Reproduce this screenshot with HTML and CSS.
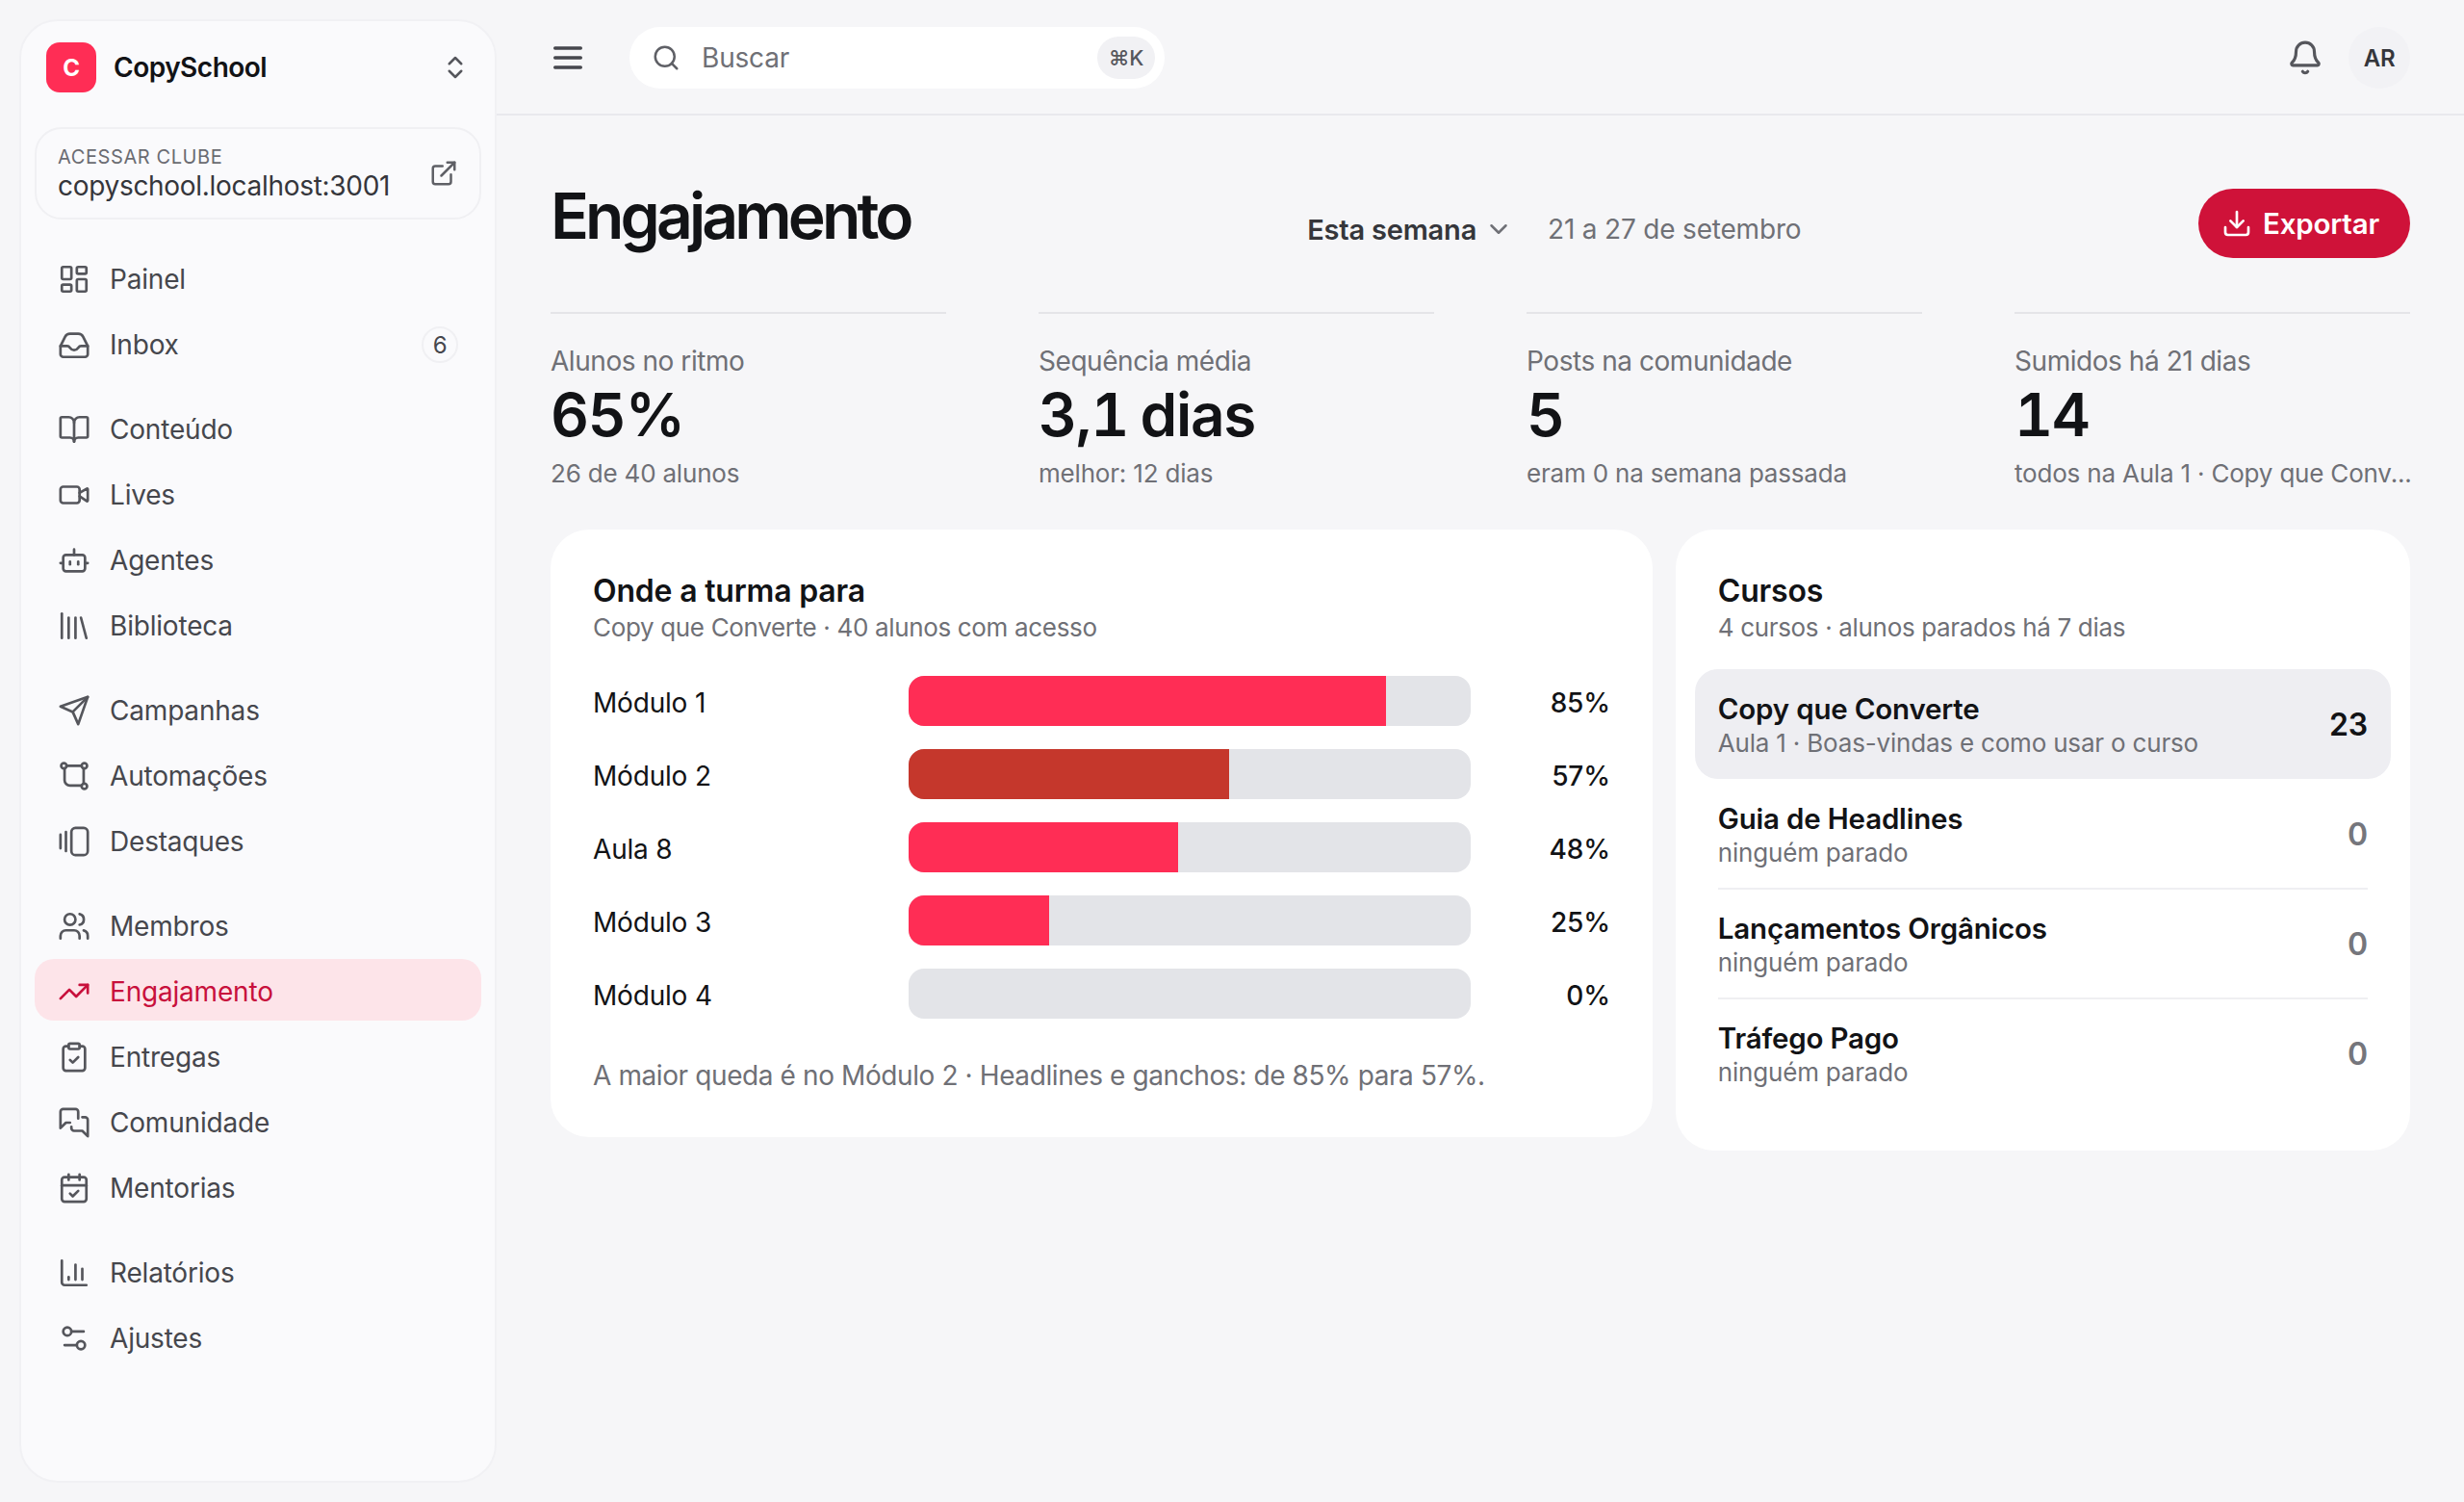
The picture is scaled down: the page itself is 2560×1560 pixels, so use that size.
FILE: index.html
```html
<!DOCTYPE html>
<html lang="pt-BR">
<head>
  <meta charset="UTF-8">
  <title>Engajamento - CopySchool</title>
  <link rel="stylesheet" href="styles.css">
</head>
<body>
  <aside class="sidebar">
    <div class="brand">
      <div class="brand-logo">C</div>
      <span class="brand-name">CopySchool</span>
      <svg class="icon brand-switch" viewBox="0 0 24 24"><path d="m7 15 5 5 5-5"/><path d="m7 9 5-5 5 5"/></svg>
    </div>

    <div class="club-link">
      <div>
        <div class="club-label">ACESSAR CLUBE</div>
        <div class="club-url">copyschool.localhost:3001</div>
      </div>
      <svg class="icon" viewBox="0 0 24 24"><path d="M15 3h6v6"/><path d="M10 14 21 3"/><path d="M18 13v6a2 2 0 0 1-2 2H5a2 2 0 0 1-2-2V8a2 2 0 0 1 2-2h6"/></svg>
    </div>

    <nav class="nav">
      <div class="nav-group">
        <a class="nav-item"><svg class="icon" viewBox="0 0 24 24"><rect x="3" y="3" width="7" height="9" rx="1"/><rect x="14" y="3" width="7" height="5" rx="1"/><rect x="14" y="12" width="7" height="9" rx="1"/><rect x="3" y="16" width="7" height="5" rx="1"/></svg>Painel</a>
        <a class="nav-item"><svg class="icon" viewBox="0 0 24 24"><path d="M2 13h5c1 0 1.500.6 2 1.300.7 1 1.700 1.700 3 1.700s2.300-.7 3-1.700c.5-.7 1-1.300 2-1.300h5"/><path d="M5.450 6.100 2 13v6a2 2 0 0 0 2 2h16a2 2 0 0 0 2-2v-6l-3.450-6.900A4 4 0 0 0 15 4H9a4 4 0 0 0-3.550 2.100z"/></svg>Inbox<span class="nav-badge">6</span></a>
      </div>
      <div class="nav-group">
        <a class="nav-item"><svg class="icon" viewBox="0 0 24 24"><path d="M12 7v14"/><path d="M3 18a1 1 0 0 1-1-1V4a1 1 0 0 1 1-1h5a4 4 0 0 1 4 4 4 4 0 0 1 4-4h5a1 1 0 0 1 1 1v13a1 1 0 0 1-1 1h-6a3 3 0 0 0-3 3 3 3 0 0 0-3-3z"/></svg>Conteúdo</a>
        <a class="nav-item"><svg class="icon" viewBox="0 0 24 24"><path d="m16 13 5.200 3.500a.5.5 0 0 0 .8-.4V7.900a.5.5 0 0 0-.8-.4L16 10.500"/><rect x="2" y="6" width="14" height="12" rx="2"/></svg>Lives</a>
        <a class="nav-item"><svg class="icon" viewBox="0 0 24 24"><path d="M12 8V4"/><rect x="4" y="8" width="16" height="12" rx="2"/><path d="M2 14h2"/><path d="M20 14h2"/><path d="M9 13v2"/><path d="M15 13v2"/></svg>Agentes</a>
        <a class="nav-item"><svg class="icon" viewBox="0 0 24 24"><path d="m17 6 4 15"/><path d="M13 6v15"/><path d="M8 6v15"/><path d="M3 3v18"/></svg>Biblioteca</a>
      </div>
      <div class="nav-group">
        <a class="nav-item"><svg class="icon" viewBox="0 0 24 24"><path d="m22 2-7 20-4-9-9-4Z"/><path d="M22 2 11 13"/></svg>Campanhas</a>
        <a class="nav-item"><svg class="icon" viewBox="0 0 24 24"><circle cx="4.500" cy="4.500" r="2"/><circle cx="19.500" cy="4.500" r="2"/><circle cx="19.500" cy="19.500" r="2"/><path d="M6.500 4.500h11"/><path d="M5 6.500V15a4 4 0 0 0 4 4h8.500"/><path d="M19 6.500v11"/></svg>Automações</a>
        <a class="nav-item"><svg class="icon" viewBox="0 0 24 24"><path d="M2 7v10"/><path d="M6 5v14"/><rect x="10" y="2" width="12" height="20" rx="3"/></svg>Destaques</a>
      </div>
      <div class="nav-group">
        <a class="nav-item"><svg class="icon" viewBox="0 0 24 24"><path d="M16 21v-2a4 4 0 0 0-4-4H6a4 4 0 0 0-4 4v2"/><path d="M16 3.100a4 4 0 0 1 0 7.800"/><path d="M22 21v-2a4 4 0 0 0-3-3.900"/><circle cx="9" cy="7" r="4"/></svg>Membros</a>
        <a class="nav-item active"><svg class="icon" viewBox="0 0 24 24"><path d="M16 7h6v6"/><path d="m22 7-8.500 8.500-5-5L2 17"/></svg>Engajamento</a>
        <a class="nav-item"><svg class="icon" viewBox="0 0 24 24"><rect x="8" y="2" width="8" height="4" rx="1"/><path d="M16 4h2a2 2 0 0 1 2 2v14a2 2 0 0 1-2 2H6a2 2 0 0 1-2-2V6a2 2 0 0 1 2-2h2"/><path d="m9 14 2 2 4-4"/></svg>Entregas</a>
        <a class="nav-item"><svg class="icon" viewBox="0 0 24 24"><path d="M15 9V4a2 2 0 0 0-2-2H4a2 2 0 0 0-2 2v12l4-4h3"/><path d="M18 8h2a2 2 0 0 1 2 2v12l-4-4h-6a2 2 0 0 1-2-2v-1"/></svg>Comunidade</a>
        <a class="nav-item"><svg class="icon" viewBox="0 0 24 24"><path d="M8 2v4"/><path d="M16 2v4"/><rect x="3" y="4" width="18" height="18" rx="2"/><path d="M3 10h18"/><path d="m9 16 2 2 4-4"/></svg>Mentorias</a>
      </div>
      <div class="nav-group">
        <a class="nav-item"><svg class="icon" viewBox="0 0 24 24"><path d="M3 3v16a2 2 0 0 0 2 2h16"/><path d="M8 17v-2"/><path d="M13 17V6"/><path d="M18 17V9"/></svg>Relatórios</a>
        <a class="nav-item"><svg class="icon" viewBox="0 0 24 24"><path d="M14 17H5"/><path d="M19 7h-9"/><circle cx="17" cy="17" r="3"/><circle cx="7" cy="7" r="3"/></svg>Ajustes</a>
      </div>
    </nav>
  </aside>

  <div class="main">
    <header class="topbar">
      <svg class="icon menu-icon" viewBox="0 0 24 24"><path d="M4 6h16"/><path d="M4 12h16"/><path d="M4 18h16"/></svg>
      <div class="search">
        <svg class="icon" viewBox="0 0 24 24"><path d="m21 21-4.300-4.300"/><circle cx="11" cy="11" r="8"/></svg>
        <span class="search-text">Buscar</span>
        <kbd class="search-key">⌘K</kbd>
      </div>
      <svg class="icon bell-icon" viewBox="0 0 24 24"><path d="M10.300 21a2 2 0 0 0 3.400 0"/><path d="M3.300 15.300A1 1 0 0 0 4 17h16a1 1 0 0 0 .7-1.700C19.400 14 18 12.500 18 8A6 6 0 0 0 6 8c0 4.500-1.400 6-2.700 7.300"/></svg>
      <div class="avatar">AR</div>
    </header>

    <main class="page">
      <div class="page-head">
        <h1>Engajamento</h1>
        <div class="period">
          <span class="period-select">Esta semana <svg class="icon" viewBox="0 0 24 24"><path d="m6 9 6 6 6-6"/></svg></span>
          <span class="period-dates">21 a 27 de setembro</span>
        </div>
        <button class="export-btn"><svg class="icon" viewBox="0 0 24 24"><path d="M12 15V3"/><path d="M21 15v4a2 2 0 0 1-2 2H5a2 2 0 0 1-2-2v-4"/><path d="m7 10 5 5 5-5"/></svg>Exportar</button>
      </div>

      <section class="stats">
        <div class="stat">
          <div class="stat-label">Alunos no ritmo</div>
          <div class="stat-value">65%</div>
          <div class="stat-sub">26 de 40 alunos</div>
        </div>
        <div class="stat">
          <div class="stat-label">Sequência média</div>
          <div class="stat-value">3,1 dias</div>
          <div class="stat-sub">melhor: 12 dias</div>
        </div>
        <div class="stat">
          <div class="stat-label">Posts na comunidade</div>
          <div class="stat-value">5</div>
          <div class="stat-sub">eram 0 na semana passada</div>
        </div>
        <div class="stat">
          <div class="stat-label">Sumidos há 21 dias</div>
          <div class="stat-value">14</div>
          <div class="stat-sub">todos na Aula 1 · Copy que Conv...</div>
        </div>
      </section>

      <section class="panels">
        <div class="card funnel">
          <h2>Onde a turma para</h2>
          <p class="card-sub">Copy que Converte · 40 alunos com acesso</p>
          <div class="bars">
            <div class="bar-row"><span>Módulo 1</span><div class="bar"><div class="bar-fill" style="width: 85%"></div></div><span class="bar-pct">85%</span></div>
            <div class="bar-row"><span>Módulo 2</span><div class="bar"><div class="bar-fill drop" style="width: 57%"></div></div><span class="bar-pct">57%</span></div>
            <div class="bar-row"><span>Aula 8</span><div class="bar"><div class="bar-fill" style="width: 48%"></div></div><span class="bar-pct">48%</span></div>
            <div class="bar-row"><span>Módulo 3</span><div class="bar"><div class="bar-fill" style="width: 25%"></div></div><span class="bar-pct">25%</span></div>
            <div class="bar-row"><span>Módulo 4</span><div class="bar"></div><span class="bar-pct">0%</span></div>
          </div>
          <p class="funnel-note">A maior queda é no Módulo 2 · Headlines e ganchos: de 85% para 57%.</p>
        </div>

        <div class="card courses">
          <div class="courses-head">
            <h2>Cursos</h2>
            <p class="card-sub">4 cursos · alunos parados há 7 dias</p>
          </div>
          <div class="course selected">
            <div class="course-info"><div class="course-name">Copy que Converte</div><div class="course-sub">Aula 1 · Boas-vindas e como usar o curso</div></div>
            <span class="course-count">23</span>
          </div>
          <div class="course">
            <div class="course-info"><div class="course-name">Guia de Headlines</div><div class="course-sub">ninguém parado</div></div>
            <span class="course-count">0</span>
          </div>
          <div class="course">
            <div class="course-info"><div class="course-name">Lançamentos Orgânicos</div><div class="course-sub">ninguém parado</div></div>
            <span class="course-count">0</span>
          </div>
          <div class="course">
            <div class="course-info"><div class="course-name">Tráfego Pago</div><div class="course-sub">ninguém parado</div></div>
            <span class="course-count">0</span>
          </div>
        </div>
      </section>
    </main>
  </div>
</body>
</html>
```

FILE: styles.css
```css
* {
  margin: 0;
  padding: 0;
  box-sizing: border-box;
}

body {
  font-family: Inter, "Liberation Sans", sans-serif;
  letter-spacing: -0.012em;
  background: #f6f6f8;
  color: #121316;
  height: 100vh;
  display: flex;
  overflow: hidden;
}

.icon {
  width: 30px;
  height: 30px;
  flex-shrink: 0;
  fill: none;
  stroke: currentColor;
  stroke-width: 2;
  stroke-linecap: round;
  stroke-linejoin: round;
}

/* Sidebar */
.sidebar {
  width: 496px;
  margin: 20px 0 20px 20px;
  padding: 22px 14px;
  background: #fafafc;
  border: 2px solid #f1f1f4;
  border-radius: 40px;
  flex-shrink: 0;
}

.brand {
  display: flex;
  align-items: center;
  padding: 0 12px;
  height: 52px;
}

.brand-logo {
  width: 52px;
  height: 52px;
  border-radius: 14px;
  background: #ff2d55;
  color: #fff;
  font-size: 24px;
  font-weight: 700;
  display: flex;
  align-items: center;
  justify-content: center;
}

.brand-name {
  margin-left: 18px;
  font-size: 28px;
  font-weight: 600;
  letter-spacing: -0.5px;
  flex: 1;
}

.brand-switch {
  color: #55565c;
}

.club-link {
  margin-top: 36px;
  height: 96px;
  padding: 0 22px;
  display: flex;
  align-items: center;
  justify-content: space-between;
  border: 2px solid #f0f0f3;
  border-radius: 28px;
  color: #5f6066;
}

.club-label {
  font-size: 20px;
  letter-spacing: 0.6px;
  line-height: 26px;
  color: #6b6c72;
}

.club-url {
  font-size: 28px;
  letter-spacing: -0.3px;
  line-height: 34px;
  color: #35363b;
}

.nav {
  margin-top: 30px;
  display: flex;
  flex-direction: column;
  gap: 24px;
}

.nav-group {
  display: flex;
  flex-direction: column;
  gap: 4px;
}

.nav-item {
  height: 64px;
  padding: 0 24px;
  display: flex;
  align-items: center;
  gap: 20px;
  border-radius: 20px;
  font-size: 28px;
  color: #46474d;
}

.nav-item .icon {
  width: 34px;
  height: 34px;
  stroke-width: 1.900;
  color: #55565c;
}

.nav-item.active {
  margin: -2px 0 2px;
  padding-top: 4px;
  background: #fde4e9;
  color: #c8103c;
}

.nav-item.active .icon {
  color: #c8103c;
}

.nav-badge {
  margin-left: auto;
  width: 38px;
  height: 38px;
  border: 2px solid #f0f0f3;
  border-radius: 50%;
  font-size: 24px;
  display: flex;
  align-items: center;
  justify-content: center;
}

/* Top bar */
.main {
  flex: 1;
  min-width: 0;
}

.topbar {
  height: 120px;
  padding: 2px 56px 0 54px;
  display: flex;
  align-items: center;
  border-bottom: 2px solid #e9e9ed;
}

.menu-icon {
  width: 40px;
  height: 40px;
  color: #46474d;
}

.search {
  width: 556px;
  height: 64px;
  margin-left: 44px;
  padding: 0 10px 0 23px;
  display: flex;
  align-items: center;
  gap: 22px;
  background: #fff;
  border-radius: 32px;
  color: #5f6066;
}

.search-text {
  flex: 1;
  font-size: 28px;
  color: #6f7076;
}

.search-key {
  width: 60px;
  height: 44px;
  border-radius: 22px;
  background: #f1f1f4;
  color: #56575d;
  font-family: Inter, "DejaVu Sans", sans-serif;
  font-size: 22px;
  font-weight: 500;
  display: flex;
  align-items: center;
  justify-content: center;
}

.bell-icon {
  width: 38px;
  height: 38px;
  margin-left: auto;
  color: #55565c;
}

.avatar {
  width: 64px;
  height: 64px;
  margin-left: 26px;
  border-radius: 50%;
  background: #f2f2f5;
  color: #35363b;
  font-size: 24px;
  font-weight: 600;
  display: flex;
  align-items: center;
  justify-content: center;
}

/* Page */
.page {
  padding: 76px 56px 0;
}

.page-head {
  display: flex;
  justify-content: space-between;
  align-items: center;
}

h1 {
  font-size: 66px;
  line-height: 56px;
  font-weight: 600;
  letter-spacing: -3.900px;
  padding-bottom: 16px;
}

.period {
  display: flex;
  align-items: center;
  gap: 36px;
  padding-top: 12px;
}

.period-select {
  display: flex;
  align-items: center;
  gap: 8px;
  font-size: 29px;
  font-weight: 600;
  color: #35363b;
}

.period-select .icon {
  color: #6f7076;
}

.period-dates {
  font-size: 28px;
  color: #6f7076;
}

.export-btn {
  height: 72px;
  padding: 0 32px 0 24px;
  display: flex;
  align-items: center;
  gap: 11px;
  border: none;
  border-radius: 36px;
  background: #cf1239;
  color: #fff;
  font-family: inherit;
  font-size: 29.500px;
  font-weight: 600;
  letter-spacing: inherit;
}

.export-btn .icon {
  width: 32px;
  height: 32px;
}

/* Stats */
.stats {
  margin-top: 56px;
  display: grid;
  grid-template-columns: repeat(4, minmax(0, 1fr));
  gap: 96px;
}

.stat {
  border-top: 2px solid #e4e4e8;
  padding-top: 30px;
  min-width: 0;
}

.stat-label {
  font-size: 28px;
  letter-spacing: -0.016em;
  line-height: 38px;
  color: #6f7076;
}

.stat-value {
  margin-top: 2px;
  font-size: 62px;
  line-height: 70px;
  font-weight: 600;
  font-variant-numeric: tabular-nums;
  letter-spacing: -0.02em;
  word-spacing: -3px;
}

.stat-sub {
  margin-top: 8px;
  font-size: 26px;
  line-height: 36px;
  color: #6f7076;
  white-space: nowrap;
}

/* Cards */
.panels {
  margin-top: 40px;
  display: grid;
  grid-template-columns: 3fr 2fr;
  gap: 24px;
  align-items: start;
}

.card {
  background: #fff;
  border-radius: 40px;
}

h2 {
  font-size: 32px;
  line-height: 40px;
  font-weight: 600;
}

.card-sub {
  font-size: 26px;
  letter-spacing: -0.013em;
  line-height: 36px;
  color: #6f7076;
}

.funnel {
  padding: 44px;
}

.bars {
  margin-top: 32px;
  display: flex;
  flex-direction: column;
  gap: 24px;
}

.bar-row {
  display: grid;
  grid-template-columns: 328px 584px 1fr;
  align-items: center;
  font-size: 28px;
}

.bar-row span {
  padding-top: 3px;
}

.bar {
  height: 52px;
  border-radius: 16px;
  background: #e3e4e8;
  overflow: hidden;
}

.bar-fill {
  height: 100%;
  background: #ff2d55;
}

.bar-fill.drop {
  background: #c5372c;
}

.bar-pct {
  text-align: right;
  font-weight: 500;
}

.funnel-note {
  margin-top: 39px;
  font-size: 28px;
  letter-spacing: -0.4px;
  line-height: 40px;
  color: #6f7076;
}

.courses {
  padding: 44px 20px;
}

.courses-head {
  padding: 0 24px 25px;
}

.course {
  height: 114px;
  padding: 1px 24px 0;
  display: flex;
  align-items: center;
  justify-content: space-between;
  position: relative;
}

.course.selected {
  background: #eeeef2;
  border-radius: 24px;
}

.course + .course + .course::before {
  content: "";
  position: absolute;
  left: 24px;
  right: 24px;
  top: -1px;
  border-top: 2px solid #efeff2;
}

.course-name {
  font-size: 29.500px;
  line-height: 38px;
  font-weight: 600;
}

.course-sub {
  font-size: 26px;
  line-height: 34px;
  color: #6f7076;
}

.course-count {
  font-size: 32px;
  font-weight: 600;
}

.course:not(.selected) .course-count {
  color: #75767c;
}
```
